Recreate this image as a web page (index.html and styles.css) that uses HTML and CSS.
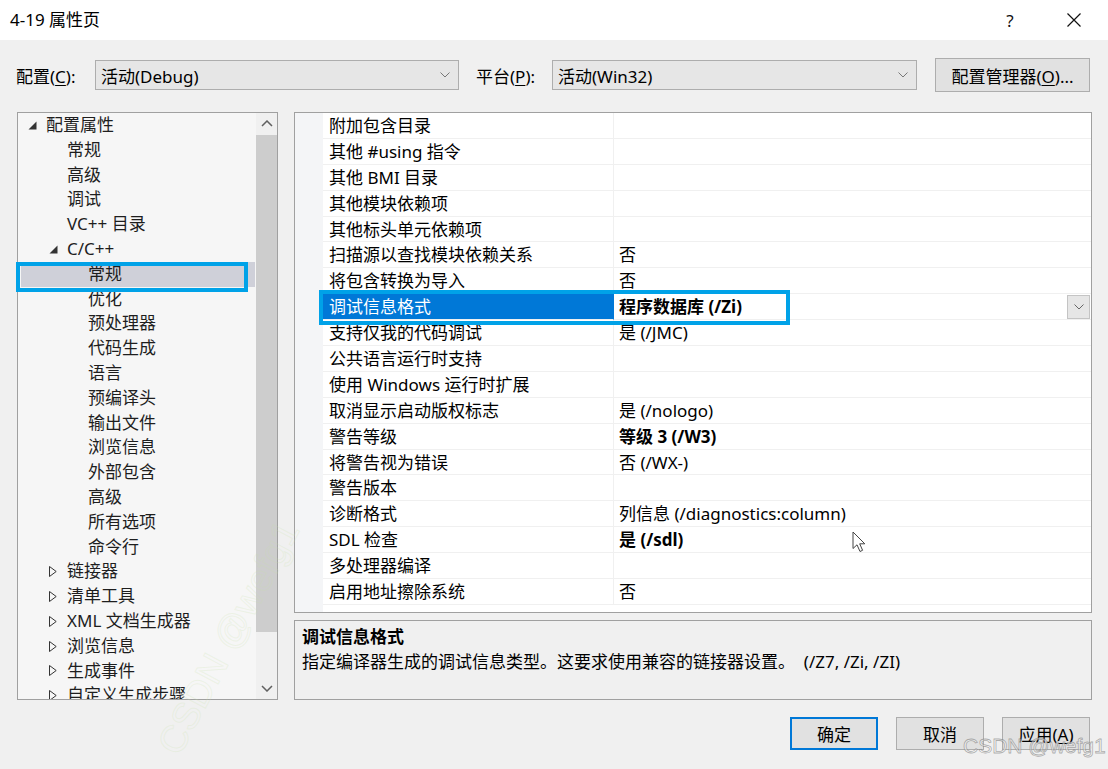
FILE: index.html
```html
<!DOCTYPE html>
<html>
<head>
<meta charset="utf-8">
<title>4-19 属性页</title>
<link rel="stylesheet" href="styles.css">
</head>
<body>
<div class="titlebar">
  <div class="title">4-19 属性页</div>
  <div class="tb-help">?</div>
  <div class="tb-close"><svg width="16" height="16" viewBox="0 0 16 16"><path d="M1.5 1.5L14.5 14.5M14.5 1.5L1.5 14.5" stroke="#111" stroke-width="1.2" fill="none"/></svg></div>
</div>

<div class="config-row">
  <span class="lbl lbl-cfg">配置(<u>C</u>):</span>
  <div class="combo combo-cfg"><span>活动(Debug)</span><svg class="chev" width="10" height="6" viewBox="0 0 10 6"><path d="M0.5 0.5L5 5L9.5 0.5" fill="none" stroke="#777"/></svg></div>
  <span class="lbl lbl-plat">平台(<u>P</u>):</span>
  <div class="combo combo-plat"><span>活动(Win32)</span><svg class="chev" width="10" height="6" viewBox="0 0 10 6"><path d="M0.5 0.5L5 5L9.5 0.5" fill="none" stroke="#777"/></svg></div>
  <button class="btn btn-mgr">配置管理器(<u>O</u>)...</button>
</div>

<div class="main">
  <div class="tree">
    <div class="tree-list">
      <div class="trow l0"><span class="tri"><svg width="9" height="9" viewBox="0 0 9 9"><path d="M8.5 0.5V8.5H0.5Z" fill="#333"/></svg></span><span>配置属性</span></div>
      <div class="trow l1"><span class="tri"></span><span>常规</span></div>
      <div class="trow l1"><span class="tri"></span><span>高级</span></div>
      <div class="trow l1"><span class="tri"></span><span>调试</span></div>
      <div class="trow l1"><span class="tri"></span><span>VC++ 目录</span></div>
      <div class="trow l1"><span class="tri"><svg width="9" height="9" viewBox="0 0 9 9"><path d="M8.5 0.5V8.5H0.5Z" fill="#333"/></svg></span><span>C/C++</span></div>
      <div class="trow l2 sel"><span class="tri"></span><span>常规</span></div>
      <div class="trow l2"><span class="tri"></span><span>优化</span></div>
      <div class="trow l2"><span class="tri"></span><span>预处理器</span></div>
      <div class="trow l2"><span class="tri"></span><span>代码生成</span></div>
      <div class="trow l2"><span class="tri"></span><span>语言</span></div>
      <div class="trow l2"><span class="tri"></span><span>预编译头</span></div>
      <div class="trow l2"><span class="tri"></span><span>输出文件</span></div>
      <div class="trow l2"><span class="tri"></span><span>浏览信息</span></div>
      <div class="trow l2"><span class="tri"></span><span>外部包含</span></div>
      <div class="trow l2"><span class="tri"></span><span>高级</span></div>
      <div class="trow l2"><span class="tri"></span><span>所有选项</span></div>
      <div class="trow l2"><span class="tri"></span><span>命令行</span></div>
      <div class="trow l1"><span class="tri"><svg width="8" height="11" viewBox="0 0 8 11"><path d="M0.5 0.5L7.2 5.5L0.5 10.5Z" fill="none" stroke="#333"/></svg></span><span>链接器</span></div>
      <div class="trow l1"><span class="tri"><svg width="8" height="11" viewBox="0 0 8 11"><path d="M0.5 0.5L7.2 5.5L0.5 10.5Z" fill="none" stroke="#333"/></svg></span><span>清单工具</span></div>
      <div class="trow l1"><span class="tri"><svg width="8" height="11" viewBox="0 0 8 11"><path d="M0.5 0.5L7.2 5.5L0.5 10.5Z" fill="none" stroke="#333"/></svg></span><span>XML 文档生成器</span></div>
      <div class="trow l1"><span class="tri"><svg width="8" height="11" viewBox="0 0 8 11"><path d="M0.5 0.5L7.2 5.5L0.5 10.5Z" fill="none" stroke="#333"/></svg></span><span>浏览信息</span></div>
      <div class="trow l1"><span class="tri"><svg width="8" height="11" viewBox="0 0 8 11"><path d="M0.5 0.5L7.2 5.5L0.5 10.5Z" fill="none" stroke="#333"/></svg></span><span>生成事件</span></div>
      <div class="trow l1"><span class="tri"><svg width="8" height="11" viewBox="0 0 8 11"><path d="M0.5 0.5L7.2 5.5L0.5 10.5Z" fill="none" stroke="#333"/></svg></span><span>自定义生成步骤</span></div>
    </div>
    <div class="vscroll">
      <div class="sb-btn"><svg width="12" height="7" viewBox="0 0 12 7"><path d="M1 6L6 1L11 6" stroke="#606060" stroke-width="1.5" fill="none"/></svg></div>
      <div class="sb-track"><div class="sb-thumb"></div></div>
      <div class="sb-btn"><svg width="12" height="7" viewBox="0 0 12 7"><path d="M1 1L6 6L11 1" stroke="#606060" stroke-width="1.5" fill="none"/></svg></div>
    </div>
    <div class="annot annot-tree"></div>
  </div>

  <div class="right">
    <div class="grid">
      <div class="prow"><div class="pg"></div><div class="pn">附加包含目录</div><div class="pv"></div></div>
      <div class="prow"><div class="pg"></div><div class="pn">其他 #using 指令</div><div class="pv"></div></div>
      <div class="prow"><div class="pg"></div><div class="pn">其他 BMI 目录</div><div class="pv"></div></div>
      <div class="prow"><div class="pg"></div><div class="pn">其他模块依赖项</div><div class="pv"></div></div>
      <div class="prow"><div class="pg"></div><div class="pn">其他标头单元依赖项</div><div class="pv"></div></div>
      <div class="prow"><div class="pg"></div><div class="pn">扫描源以查找模块依赖关系</div><div class="pv">否</div></div>
      <div class="prow"><div class="pg"></div><div class="pn">将包含转换为导入</div><div class="pv">否</div></div>
      <div class="prow sel"><div class="pg"></div><div class="pn">调试信息格式</div><div class="pv"><b>程序数据库 (/Zi)</b><span class="dd"><svg width="10" height="6" viewBox="0 0 10 6"><path d="M0.5 0.5L5 5L9.5 0.5" fill="none" stroke="#666"/></svg></span></div></div>
      <div class="prow"><div class="pg"></div><div class="pn">支持仅我的代码调试</div><div class="pv">是 (/JMC)</div></div>
      <div class="prow"><div class="pg"></div><div class="pn">公共语言运行时支持</div><div class="pv"></div></div>
      <div class="prow"><div class="pg"></div><div class="pn">使用 Windows 运行时扩展</div><div class="pv"></div></div>
      <div class="prow"><div class="pg"></div><div class="pn">取消显示启动版权标志</div><div class="pv">是 (/nologo)</div></div>
      <div class="prow"><div class="pg"></div><div class="pn">警告等级</div><div class="pv"><b>等级 3 (/W3)</b></div></div>
      <div class="prow"><div class="pg"></div><div class="pn">将警告视为错误</div><div class="pv">否 (/WX-)</div></div>
      <div class="prow"><div class="pg"></div><div class="pn">警告版本</div><div class="pv"></div></div>
      <div class="prow"><div class="pg"></div><div class="pn">诊断格式</div><div class="pv">列信息 (/diagnostics:column)</div></div>
      <div class="prow"><div class="pg"></div><div class="pn">SDL 检查</div><div class="pv"><b>是 (/sdl)</b></div></div>
      <div class="prow"><div class="pg"></div><div class="pn">多处理器编译</div><div class="pv"></div></div>
      <div class="prow"><div class="pg"></div><div class="pn">启用地址擦除系统</div><div class="pv">否</div></div>
      <div class="annot annot-grid"></div>
    </div>
    <div class="desc">
      <div class="desc-title">调试信息格式</div>
      <div class="desc-text">指定编译器生成的调试信息类型。这要求使用兼容的链接器设置。&nbsp; (/Z7, /Zi, /ZI)</div>
    </div>
  </div>
</div>

<div class="buttons">
  <button class="btn btn-dlg btn-default">确定</button>
  <button class="btn btn-dlg">取消</button>
  <button class="btn btn-dlg">应用(<u>A</u>)</button>
</div>

<div class="wm-diag">CSDN @wefg1</div>
<div class="watermark">CSDN @wefg1</div>
<svg class="cursor" width="15" height="22" viewBox="0 0 15 22"><path d="M1 1V17.5L5 13.8L8 20.5L10.6 19.3L7.7 12.8H12.8Z" fill="#fff" stroke="#444" stroke-width="1" stroke-linejoin="round"/></svg>
</body>
</html>
```

FILE: styles.css
```css
* { box-sizing: border-box; }
html, body { margin: 0; padding: 0; }
body {
  width: 1108px;
  height: 769px;
  overflow: hidden;
  position: relative;
  background: #f0f0f0;
  font-family: "Noto Sans", "Noto Sans CJK SC", sans-serif;
  font-size: 17px;
  color: #000;
}
u { text-decoration: underline; text-underline-offset: 2px; }

.titlebar {
  height: 40px;
  background: #fff;
  display: flex;
  align-items: center;
}
.title { flex: 1; padding-left: 10px; line-height: 40px; }
.tb-help { width: 40px; text-align: center; margin-right: 24px; font-size: 17px; color: #111; }
.tb-close { width: 40px; margin-right: 14px; display: flex; justify-content: center; }

.config-row {
  display: flex;
  align-items: center;
  height: 34px;
  margin-top: 18px;
  padding-left: 16px;
}
.lbl { white-space: nowrap; }
.lbl-cfg { width: 79px; }
.lbl-plat { width: 76px; margin-left: 17px; }
.combo {
  height: 30px;
  background: #e6e6e6;
  border: 1px solid #adadad;
  display: flex;
  align-items: center;
  justify-content: space-between;
  padding: 0 8px 0 5px;
}
.combo-cfg { width: 364px; }
.combo-plat { width: 365px; }
.btn {
  font: inherit;
  background: #e1e1e1;
  border: 1px solid #adadad;
  color: #000;
  padding: 0;
  margin: 0;
}
.btn-mgr { width: 155px; height: 34px; margin-left: 18px; }

.main {
  display: flex;
  height: 588px;
  margin-top: 20px;
  padding-left: 17px;
}
.tree {
  width: 261px;
  border: 1px solid #a0a0a0;
  background: #f6f6f6;
  display: flex;
  position: relative;
}
.tree-list { flex: 1; overflow: hidden; color: #1e1e1e; }
.trow {
  height: 24.8px;
  line-height: 24.8px;
  display: flex;
  align-items: center;
  margin: 0 1px 0 3px;
  white-space: nowrap;
}
.trow.l0 { padding-left: 7px; }
.trow.l1 { padding-left: 28px; }
.trow.l2 { padding-left: 49px; }
.trow.sel { background: #cfd0d9; }
.tri { width: 18px; flex: none; display: flex; align-items: center; }

.vscroll {
  width: 21px;
  flex: none;
  background: #f0f0f0;
  display: flex;
  flex-direction: column;
}
.sb-btn { height: 21px; flex: none; display: flex; align-items: center; justify-content: center; }
.sb-track { flex: 1; padding-top: 1px; }
.sb-thumb { height: 497px; background: #cdcdcd; }

.annot {
  position: absolute;
  border: 4px solid #00a2e8;
  pointer-events: none;
}
.annot-tree { left: -2px; top: 149px; width: 232px; height: 30px; }
.annot-grid { left: 24px; top: 177px; width: 471px; height: 35px; }

.right {
  width: 798px;
  margin-left: 16px;
  display: flex;
  flex-direction: column;
}
.grid {
  height: 501px;
  border: 1px solid #a0a0a0;
  background: linear-gradient(to right, #f4f5f7 28px, #fff 28px);
  position: relative;
  overflow: hidden;
}
.prow { display: flex; height: 25.9px; line-height: 25px; }
.pg { width: 28px; flex: none; }
.pn {
  width: 291px;
  flex: none;
  padding-left: 6px;
  border-bottom: 1px solid #f0f0f0;
  border-right: 1px solid #f0f0f0;
  white-space: nowrap;
  overflow: hidden;
}
.pv {
  flex: 1;
  padding-left: 5px;
  border-bottom: 1px solid #f0f0f0;
  display: flex;
  align-items: center;
  justify-content: space-between;
  white-space: nowrap;
}
.prow.sel .pn { background: #0078d7; color: #fff; border-right-color: #0078d7; }
.dd {
  width: 23px;
  height: 24px;
  margin-right: 1px;
  background: #e6e6e6;
  border: 1px solid #c4c4c4;
  display: flex;
  align-items: center;
  justify-content: center;
}
b { font-weight: 700; }

.desc {
  margin-top: 7px;
  height: 80px;
  border: 1px solid #a0a0a0;
  background: #f0f0f0;
  padding: 3px 7px;
  line-height: 25px;
}
.desc-title { font-weight: 700; }

.buttons {
  display: flex;
  justify-content: flex-end;
  gap: 18px;
  margin-top: 17px;
  padding-right: 18px;
}
.btn-dlg { width: 88px; height: 33px; }
.btn-default { border: 2px solid #0078d7; }

.watermark {
  position: absolute;
  left: 963px;
  top: 734px;
  font-family: "Liberation Sans", sans-serif;
  font-size: 21px;
  color: rgba(255, 255, 255, 0.55);
  -webkit-text-stroke: 0.8px rgba(110, 110, 110, 0.55);
  white-space: nowrap;
  pointer-events: none;
}
.wm-diag {
  position: absolute;
  left: 150px;
  top: 742px;
  font-family: "Liberation Sans", sans-serif;
  font-size: 38px;
  line-height: 40px;
  color: transparent;
  -webkit-text-stroke: 1px rgba(200, 225, 170, 0.22);
  transform: rotate(-62deg);
  transform-origin: left top;
  white-space: nowrap;
  pointer-events: none;
}
.cursor { position: absolute; left: 852px; top: 531px; }
```
